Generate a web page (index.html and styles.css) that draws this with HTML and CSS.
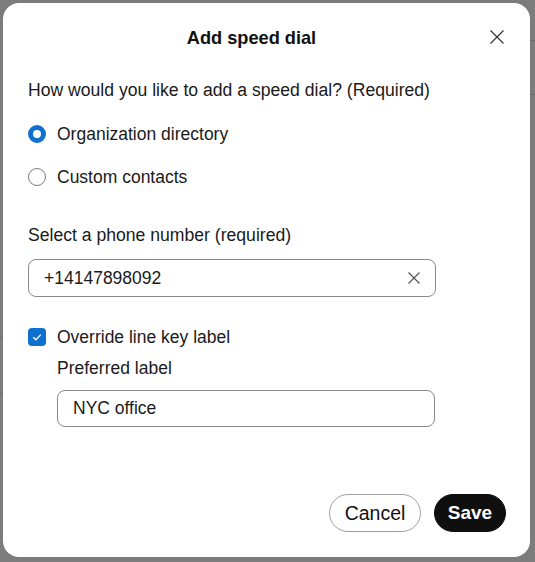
FILE: index.html
```html
<!DOCTYPE html>
<html lang="en">
<head>
<meta charset="utf-8">
<title>Add speed dial</title>
<link rel="stylesheet" href="styles.css">
</head>
<body>
<div class="backdrop">
  <div class="bg-line l1"></div>
  <div class="bg-line l2"></div>
  <div class="bg-line l3"></div>
  <div class="bg-line l4"></div>
  <div class="dialog">
    <div class="header">
      <h1 class="title">Add speed dial</h1>
      <button class="close" aria-label="Close">
        <svg width="16" height="16" viewBox="0 0 16 16"><path d="M1.5 1.5 L14.5 14.5 M14.5 1.5 L1.5 14.5" stroke="#333" stroke-width="1.2" fill="none"/></svg>
      </button>
    </div>
    <div class="body">
      <p class="question">How would you like to add a speed dial? (Required)</p>
      <div class="radios">
        <label class="radio-row"><span class="radio checked"></span><span>Organization directory</span></label>
        <label class="radio-row"><span class="radio"></span><span>Custom contacts</span></label>
      </div>
      <p class="field-label">Select a phone number (required)</p>
      <div class="input">
        <span>+14147898092</span>
        <svg class="clear" width="14" height="14" viewBox="0 0 14 14"><path d="M1.5 1.5 L12.5 12.5 M12.5 1.5 L1.5 12.5" stroke="#555" stroke-width="1.2" fill="none"/></svg>
      </div>
      <label class="check-row">
        <span class="checkbox"><svg width="12" height="12" viewBox="0 0 12 12"><path d="M2.2 6.2 L4.9 8.8 L9.8 3.6" stroke="#fff" stroke-width="1.3" fill="none"/></svg></span>
        <span>Override line key label</span>
      </label>
      <div class="sub">
        <p class="sub-label">Preferred label</p>
        <div class="input input2"><span>NYC office</span></div>
      </div>
    </div>
    <div class="footer">
      <button class="btn cancel">Cancel</button>
      <button class="btn save">Save</button>
    </div>
  </div>
</div>
</body>
</html>
```
FILE: styles.css
```css
* { box-sizing: border-box; }
html, body { margin: 0; padding: 0; }
body {
  width: 535px;
  height: 562px;
  overflow: hidden;
  font-family: "Liberation Sans", Arial, sans-serif;
  color: #1a1a1a;
}
.backdrop {
  position: relative;
  width: 535px;
  height: 562px;
  background: #7c7c7c;
  padding: 3px 5px 5px 3px;
}
.bg-line {
  position: absolute;
  height: 1px;
  background: #6a6a6a;
  right: 0;
  width: 10px;
}
.l1 { top: 40px; }
.l2 { top: 94px; }
.l3 { top: 393px; left: 0; width: 5px; }
.l4 { top: 337px; left: 0; width: 5px; }
.dialog {
  position: relative;
  z-index: 1;
  height: 554px;
  background: #fff;
  border-radius: 16px;
  display: flex;
  flex-direction: column;
}
.header {
  position: relative;
  height: 70px;
  display: flex;
  align-items: center;
  justify-content: center;
  padding-right: 30px;
}
.title {
  margin: 0;
  font-size: 18.2px;
  font-weight: 700;
  color: #111;
}
.close {
  position: absolute;
  right: 25px;
  top: 26px;
  width: 16px;
  height: 16px;
  padding: 0;
  border: 0;
  background: none;
  display: flex;
}
.body {
  padding: 0 25px;
  flex: 1;
}
.question {
  margin: 7px 0 0;
  font-size: 17.6px;
  line-height: 20px;
}
.radios {
  display: flex;
  flex-direction: column;
  gap: 23px;
  margin-top: 24px;
}
.radio-row, .check-row {
  display: flex;
  align-items: center;
  gap: 11px;
  font-size: 17.5px;
  line-height: 20px;
}
.radio {
  width: 18px;
  height: 18px;
  border-radius: 50%;
  border: 1px solid #7a7a7a;
  flex: none;
}
.radio.checked {
  border: 5.5px solid #1170cf;
  background: #fff;
}
.field-label {
  margin: 38px 0 0;
  font-size: 17.6px;
  line-height: 20px;
}
.input {
  margin-top: 14px;
  width: 408px;
  height: 38px;
  border: 1px solid #8a8a8a;
  border-radius: 8px;
  display: flex;
  align-items: center;
  justify-content: space-between;
  padding: 0 14px 0 15px;
  font-size: 17.5px;
}
.clear { display: block; }
.check-row { margin-top: 30px; }
.checkbox {
  width: 18px;
  height: 18px;
  border-radius: 4px;
  background: #1170cf;
  display: flex;
  align-items: center;
  justify-content: center;
  flex: none;
}
.sub { padding-left: 29px; }
.sub-label {
  margin: 11px 0 0;
  font-size: 17.5px;
  line-height: 20px;
}
.input2 {
  width: 378px;
  height: 37px;
  margin-top: 12px;
}
.footer {
  display: flex;
  justify-content: flex-end;
  gap: 13px;
  padding: 0 24px 25px 0;
}
.btn {
  height: 38px;
  border-radius: 19px;
  font-family: inherit;
  font-size: 19.5px;
  padding: 0;
}
.cancel {
  background: #fff;
  border: 1px solid #a0a0a0;
  color: #111;
  width: 92px;
}
.save {
  background: #0f0f0f;
  border: 1px solid #0f0f0f;
  color: #fff;
  font-weight: 700;
  font-size: 19px;
  width: 72px;
}
```
